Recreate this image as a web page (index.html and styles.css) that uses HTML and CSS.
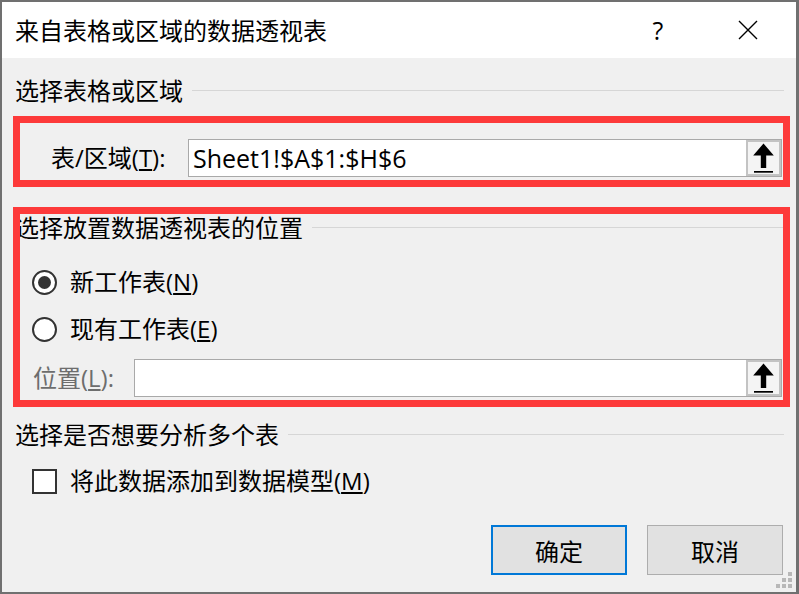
FILE: index.html
```html
<!DOCTYPE html>
<html lang="zh-CN">
<head>
<meta charset="utf-8">
<title>来自表格或区域的数据透视表</title>
<link rel="stylesheet" href="styles.css">
</head>
<body>
<div class="dialog">
  <div class="titlebar">
    <span class="title">来自表格或区域的数据透视表</span>
    <span class="tb-btn help">?</span>
    <span class="tb-btn close"><svg width="20" height="20" viewBox="0 0 20 20"><path d="M1 1 L19 19 M19 1 L1 19" stroke="#000" stroke-width="1.4" fill="none"/></svg></span>
  </div>
  <div class="content">
    <div class="group-head gh1"><span>选择表格或区域</span><i class="rule"></i></div>
    <div class="field-row fr1">
      <span class="lbl">表/区域(<u>T</u>):</span>
      <div class="input">
        <span class="val">Sheet1!$A$1:$H$6</span>
        <span class="pick"><svg width="31" height="33" viewBox="0 0 31 33"><path d="M15.5 1.5 L25.8 13.5 L18.2 13.5 L18.2 26 L12.8 26 L12.8 13.5 L5.2 13.5 Z" fill="#000"/><rect x="6" y="29" width="19" height="1.7" fill="#000"/></svg></span>
      </div>
    </div>
    <div class="group-head gh2"><span>选择放置数据透视表的位置</span><i class="rule"></i></div>
    <div class="opt-row or1"><span class="radio on"></span><span class="opt-text">新工作表(<u>N</u>)</span></div>
    <div class="opt-row or2"><span class="radio"></span><span class="opt-text">现有工作表(<u>E</u>)</span></div>
    <div class="field-row fr2">
      <span class="lbl lbl-dis">位置(<u>L</u>):</span>
      <div class="input">
        <span class="val"></span>
        <span class="pick"><svg width="31" height="33" viewBox="0 0 31 33"><path d="M15.5 1.5 L25.8 13.5 L18.2 13.5 L18.2 26 L12.8 26 L12.8 13.5 L5.2 13.5 Z" fill="#000"/><rect x="6" y="29" width="19" height="1.7" fill="#000"/></svg></span>
      </div>
    </div>
    <div class="group-head gh3"><span>选择是否想要分析多个表</span><i class="rule"></i></div>
    <div class="opt-row cr"><span class="check"></span><span class="opt-text">将此数据添加到数据模型(<u>M</u>)</span></div>
    <div class="actions">
      <span class="btn btn-default">确定</span>
      <span class="btn">取消</span>
    </div>
  </div>
  <div class="mark mark1"></div>
  <div class="mark mark2"></div>
  <div class="grip">
    <i></i><i></i><i class="g-on"></i>
    <i></i><i class="g-on"></i><i class="g-on"></i>
    <i class="g-on"></i><i class="g-on"></i><i class="g-on"></i>
  </div>
</div>
</body>
</html>
```

FILE: styles.css
```css
html, body {
  margin: 0;
  padding: 0;
}
body {
  background: #707070;
  width: 799px;
  height: 594px;
  overflow: hidden;
  font-family: "Open Sans", "Noto Sans CJK SC", sans-serif;
  color: #000;
}
.dialog {
  position: relative;
  margin: 2px 0 0 2px;
  width: 794px;
  height: 590px;
  background: #f0f0f0;
}
.titlebar {
  height: 56px;
  background: #fff;
  display: flex;
  align-items: center;
  padding: 0 3px 0 13px;
}
.title {
  flex: 1;
  font-size: 24px;
  line-height: 32px;
  font-family: "Noto Sans CJK SC", sans-serif;
}
.tb-btn {
  width: 90px;
  height: 56px;
  display: flex;
  align-items: center;
  justify-content: center;
}
.help {
  font-size: 25px;
  font-family: "Open Sans", sans-serif;
}
.close svg {
  display: block;
}
.content {
  padding: 16px 12px 0 13px;
  display: flex;
  flex-direction: column;
}
.group-head {
  display: flex;
  align-items: center;
  height: 32px;
  font-size: 24px;
  line-height: 32px;
  font-family: "Noto Sans CJK SC", sans-serif;
}
.group-head .rule {
  flex: 1;
  height: 1px;
  background: #d6d6d6;
  margin-left: 9px;
}
.gh2 { margin-top: 34px; }
.gh3 { margin-top: 21px; }
.field-row {
  display: flex;
  align-items: center;
  height: 38px;
  padding-right: 2px;
}
.fr1 { margin-top: 33px; }
.fr2 { margin-top: 14px; }
.lbl {
  font-size: 24px;
  line-height: 32px;
  white-space: nowrap;
}
.fr1 .lbl { margin-left: 36px; width: 137px; }
.fr2 .lbl { margin-left: 18px; width: 101px; }
.lbl-dis { color: #6d6d6d; }
.input {
  flex: 1;
  height: 38px;
  box-sizing: border-box;
  border: 1px solid #a9a9a9;
  background: #fff;
  display: flex;
  align-items: center;
}
.val {
  flex: 1;
  font-size: 25px;
  line-height: 32px;
  padding-left: 4px;
  white-space: nowrap;
}
.pick {
  width: 35px;
  height: 36px;
  box-sizing: border-box;
  border: 2px solid #c3c3c3;
  background: #f4f4f4;
  display: flex;
  align-items: center;
  justify-content: center;
}
.pick svg { display: block; }
.opt-row {
  display: flex;
  align-items: center;
  height: 32px;
  padding-left: 17px;
}
.or1 { margin-top: 23px; }
.or2 { margin-top: 15px; }
.cr { margin-top: 15px; }
.opt-text {
  font-size: 24px;
  line-height: 32px;
  margin-left: 13px;
  white-space: nowrap;
}
.radio {
  width: 25px;
  height: 25px;
  box-sizing: border-box;
  border: 2px solid #333;
  border-radius: 50%;
  background: #fff;
  display: flex;
  align-items: center;
  justify-content: center;
}
.radio.on::after {
  content: "";
  width: 13px;
  height: 13px;
  border-radius: 50%;
  background: #333;
}
.check {
  width: 25px;
  height: 25px;
  box-sizing: border-box;
  border: 2px solid #333;
  background: #fff;
}
.actions {
  display: flex;
  justify-content: flex-end;
  gap: 20px;
  margin-top: 28px;
  padding-right: 1px;
}
.btn {
  width: 136px;
  height: 50px;
  box-sizing: border-box;
  border: 1px solid #adadad;
  background: #e1e1e1;
  display: flex;
  align-items: center;
  justify-content: center;
  font-size: 24px;
  font-family: "Noto Sans CJK SC", sans-serif;
}
.btn-default {
  border: 2px solid #0078d7;
}
.mark {
  position: absolute;
  box-sizing: border-box;
  border: 7px solid #fd3a3a;
  pointer-events: none;
}
.mark1 {
  left: 11px;
  top: 114px;
  width: 777px;
  height: 71px;
}
.mark2 {
  left: 11px;
  top: 205px;
  width: 777px;
  height: 200px;
}
.grip {
  position: absolute;
  right: 4px;
  bottom: 4px;
  display: grid;
  grid-template-columns: repeat(3, 4px);
  grid-auto-rows: 4px;
  gap: 2px;
}
.grip .g-on { background: #b8b8b8; }
```
